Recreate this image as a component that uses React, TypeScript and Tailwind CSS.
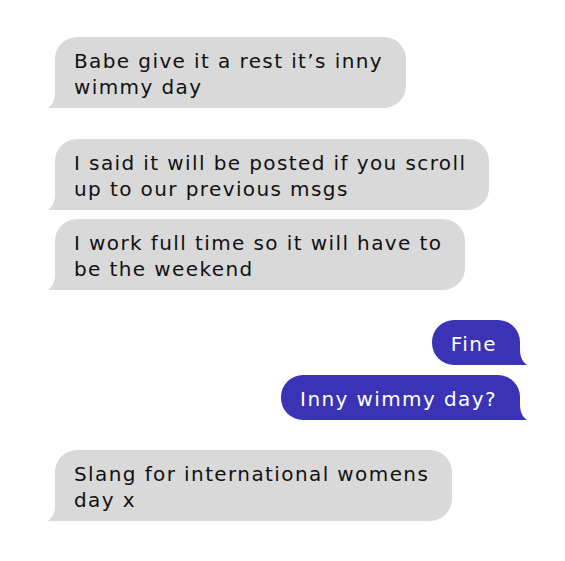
import { ReactNode } from 'react';

type Side = 'in' | 'out';

const Tail = ({ side }: { side: Side }) =>
  side === 'in' ? (
    <svg
      className="absolute bottom-0 -left-[7px] h-[16px] w-[8px] text-[#d9d9d9]"
      viewBox="0 0 8 16"
      fill="currentColor"
    >
      <path d="M8 0 L8 16 L0 16 C4 13 7 9 7 0 Z" />
    </svg>
  ) : (
    <svg
      className="absolute bottom-0 -right-[7px] h-[16px] w-[8px] text-[#3a33b6]"
      viewBox="0 0 8 16"
      fill="currentColor"
    >
      <path d="M0 0 L0 16 L8 16 C4 13 1 9 1 0 Z" />
    </svg>
  );

const Bubble = ({ side, children }: { side: Side; children: ReactNode }) => (
  <div
    className={`relative w-fit pt-[11px] pb-[8px] pl-[19px] pr-[23px] text-[20px] leading-[26px] tracking-[1.4px] ${
      side === 'in'
        ? 'self-start rounded-[22px] rounded-bl-none bg-[#d9d9d9] text-[#111]'
        : 'self-end rounded-[22px] rounded-br-none bg-[#3a33b6] text-white'
    }`}
  >
    {children}
    <Tail side={side} />
  </div>
);

export default function App() {
  return (
    <div
      className="flex h-[561px] w-[565px] flex-col bg-white pt-[37px] pl-[55px] pr-[45px]"
      style={{ fontFamily: '"DejaVu Sans", sans-serif' }}
    >
      <Bubble side="in">
        Babe give it a rest it’s inny
        <br />
        wimmy day
      </Bubble>
      <div className="mt-[31px] flex flex-col gap-[9px]">
        <Bubble side="in">
          I said it will be posted if you scroll
          <br />
          up to our previous msgs
        </Bubble>
        <Bubble side="in">
          I work full time so it will have to
          <br />
          be the weekend
        </Bubble>
      </div>
      <div className="mt-[30px] flex flex-col gap-[10px]">
        <Bubble side="out">Fine</Bubble>
        <Bubble side="out">Inny wimmy day?</Bubble>
      </div>
      <div className="mt-[30px] flex flex-col">
        <Bubble side="in">
          Slang for international womens
          <br />
          day x
        </Bubble>
      </div>
    </div>
  );
}
